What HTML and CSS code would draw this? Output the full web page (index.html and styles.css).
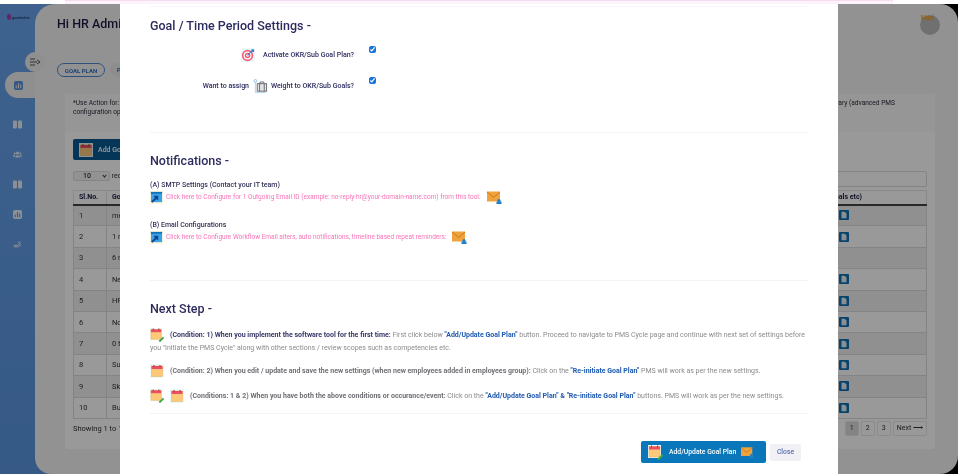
FILE: index.html
```html
<!DOCTYPE html>
<html lang="en">
<head>
<meta charset="utf-8">
<title>Goal Plan</title>
<link rel="stylesheet" href="styles.css">
</head>
<body>
<svg class="defs" aria-hidden="true">
  <symbol id="i-target" viewBox="0 0 16 16">
    <rect width="16" height="16" fill="#eaf8fb"/>
    <circle cx="7.5" cy="8.5" r="6.5" fill="#f2607a"/>
    <circle cx="7.5" cy="8.5" r="4.6" fill="#fff"/>
    <circle cx="7.5" cy="8.5" r="3.2" fill="#ee5a74"/>
    <circle cx="7.5" cy="8.5" r="1.5" fill="#fff"/>
    <path d="M7.5 8.5 13.5 2.5" stroke="#3a7bc8" stroke-width="1.2"/>
    <path d="M12 1.5h3v3h-3z" fill="#3a7bc8"/>
  </symbol>
  <symbol id="i-case" viewBox="0 0 16 16">
    <path d="M2.5 3v11.5h11" fill="none" stroke="#a9d4f0" stroke-width="1"/>
    <circle cx="2.5" cy="2" r="1.5" fill="none" stroke="#8fc4ea" stroke-width="1"/>
    <rect x="4.5" y="5" width="10" height="8" fill="#e4e4e4" stroke="#66666e" stroke-width="1"/>
    <path d="M7.5 5V3.2h4V5M7 5v8M12 5v8" fill="none" stroke="#66666e" stroke-width="1"/>
  </symbol>
  <symbol id="i-launch" viewBox="0 0 14 14">
    <rect x="0" y="0" width="14" height="14" fill="#fdf6d8"/>
    <rect x="1" y="1" width="12" height="11" fill="#39a3ea"/>
    <rect x="1" y="1" width="12" height="2" fill="#1572b8"/>
    <path d="M2 12 7.5 6.5M4.5 6h3.5v3.5" fill="none" stroke="#143f8a" stroke-width="1.8"/>
  </symbol>
  <symbol id="i-mail" viewBox="0 0 15 14">
    <rect x="0" y="1" width="13" height="10" fill="#f0a23c"/>
    <path d="M0 1.5 6.5 7 13 1.5" fill="none" stroke="#c97a1e" stroke-width="1"/>
    <circle cx="12" cy="10" r="1.6" fill="#1f80c8"/>
    <rect x="9.5" y="11" width="5" height="2.5" fill="#1f80c8"/>
  </symbol>
  <symbol id="i-cal" viewBox="0 0 14 14">
    <rect width="14" height="14" fill="#e6f9fb"/>
    <rect x="1.5" y="2" width="11" height="10.5" fill="#fdc878" stroke="#f1b35e" stroke-width=".6"/>
    <rect x="1.5" y="2" width="11" height="3" fill="#ea4f63"/>
    <path d="M4 1v2M10 1v2" stroke="#a33" stroke-width="1"/>
  </symbol>
  <symbol id="i-calpen" viewBox="0 0 15 15">
    <rect width="13" height="13" fill="#e6f9fb"/>
    <rect x="1" y="1.5" width="11" height="10.5" fill="#fdc878" stroke="#f1b35e" stroke-width=".6"/>
    <rect x="1" y="1.5" width="11" height="3" fill="#ea4f63"/>
    <path d="M3.5.5v2M9.5.5v2" stroke="#a33" stroke-width="1"/>
    <path d="M10 14.5 14.5 10" stroke="#3ea844" stroke-width="2"/>
  </symbol>
  <symbol id="i-doc" viewBox="0 0 10 10">
    <rect width="10" height="10" rx="1" fill="#0c70b5"/>
    <path d="M2.5 1.8h3.2l1.8 1.8v4.6h-5z" fill="#e6eef5"/>
  </symbol>
  <symbol id="i-chart" viewBox="0 0 10 10">
    <rect width="10" height="10" rx="2" fill="currentColor"/>
    <path d="M2.5 8V5M5 8V2.5M7.5 8V4" stroke="var(--bar, #5a94da)" stroke-width="1.2"/>
  </symbol>
  <symbol id="i-book" viewBox="0 0 10 10">
    <rect width="4.4" height="9" y=".5" rx="1.2" fill="currentColor"/>
    <rect x="5.6" y=".5" width="4.4" height="9" rx="1.2" fill="currentColor"/>
  </symbol>
  <symbol id="i-people" viewBox="0 0 12 10">
    <circle cx="6" cy="3" r="2" fill="currentColor"/>
    <circle cx="2.3" cy="3.6" r="1.4" fill="currentColor"/>
    <circle cx="9.7" cy="3.6" r="1.4" fill="currentColor"/>
    <path d="M2.8 9c0-4 6.4-4 6.4 0zM0 8c0-2.6 2-3 2.8-2.6L2 8zM12 8c0-2.6-2-3-2.8-2.6L10 8z" fill="currentColor"/>
  </symbol>
  <symbol id="i-hand" viewBox="0 0 12 10">
    <path d="M1 6h5l4-3M1 8h6l4-3M7 2h3" fill="none" stroke="currentColor" stroke-width="1.3"/>
  </symbol>
  <symbol id="i-toggle" viewBox="0 0 12 10">
    <path d="M1 2h5M1 5h7M1 8h5M8 3l3 2-3 2" fill="none" stroke="#55565c" stroke-width="1"/>
  </symbol>
</svg>

<div class="app">
  <aside class="side">
    <div class="logo"><span class="logo-mark"></span>goalsetter</div>
    <div class="side-toggle"><svg class="ic12"><use href="#i-toggle"/></svg></div>
    <nav class="nav">
      <div class="nav-active"><svg class="ic9"><use href="#i-chart"/></svg></div>
      <svg class="nav-ic"><use href="#i-book"/></svg>
      <svg class="nav-ic"><use href="#i-people"/></svg>
      <svg class="nav-ic"><use href="#i-book"/></svg>
      <svg class="nav-ic"><use href="#i-chart"/></svg>
      <svg class="nav-ic"><use href="#i-hand"/></svg>
    </nav>
  </aside>
  <main class="main">
    <header class="top">
      <h1 class="hello">Hi HR Admin</h1>
      <div class="avatar"><span class="avatar-brand">Hari</span></div>
    </header>
    <div class="tabs">
      <span class="tab tab-on">GOAL PLAN</span>
      <span class="tab">PMS</span>
    </div>
    <section class="panel">
      <div class="note">
        <p class="note-left">*Use Action for:<br>configuration options</p>
        <p class="note-right">rary (advanced PMS</p>
      </div>
      <div class="list">
        <button class="add-btn"><svg class="ic14"><use href="#i-cal"/></svg>Add Goal Plan</button>
        <div class="controls">
          <span class="len"><span class="sel">10 <i class="caret"></i></span> records</span>
          <span class="search"></span>
        </div>
        <table class="grid">
          <colgroup><col class="c1"><col class="c2"><col class="c3"></colgroup>
          <thead><tr><th>Sl.No.</th><th>Goal Plan Name</th><th class="act">(Sub Goals etc)</th></tr></thead>
          <tbody>
            <tr><td>1</td><td>me</td><td class="act"><svg class="ic10"><use href="#i-doc"/></svg></td></tr>
            <tr><td>2</td><td>1 r</td><td class="act"><svg class="ic10"><use href="#i-doc"/></svg></td></tr>
            <tr><td>3</td><td>6 r</td><td class="act"></td></tr>
            <tr><td>4</td><td>Ne</td><td class="act"><svg class="ic10"><use href="#i-doc"/></svg></td></tr>
            <tr><td>5</td><td>HR</td><td class="act"><svg class="ic10"><use href="#i-doc"/></svg></td></tr>
            <tr><td>6</td><td>No</td><td class="act"><svg class="ic10"><use href="#i-doc"/></svg></td></tr>
            <tr><td>7</td><td>0 t</td><td class="act"><svg class="ic10"><use href="#i-doc"/></svg></td></tr>
            <tr><td>8</td><td>Su</td><td class="act"><svg class="ic10"><use href="#i-doc"/></svg></td></tr>
            <tr><td>9</td><td>Sk</td><td class="act"><svg class="ic10"><use href="#i-doc"/></svg></td></tr>
            <tr><td>10</td><td>Bu</td><td class="act"><svg class="ic10"><use href="#i-doc"/></svg></td></tr>
          </tbody>
        </table>
        <div class="foot">
          <span>Showing 1 to 10</span>
          <span class="pager"><span class="pg pg-on">1</span><span class="pg">2</span><span class="pg">3</span><span class="pg">Next ⟶</span></span>
        </div>
      </div>
    </section>
  </main>
</div>

<div class="overlay"></div>

<div class="modal">
  <hr class="rule rule-top">
  <h2 class="title t1">Goal / Time Period Settings -</h2>
  <div class="opt opt1">
    <div class="opt-label"><svg class="ic14 gap-r8"><use href="#i-target"/></svg>Activate OKR/Sub Goal Plan?</div>
    <input class="chk" type="checkbox" checked>
  </div>
  <div class="opt opt2">
    <div class="opt-label">Want to assign<svg class="ic15 gap-x"><use href="#i-case"/></svg>Weight to OKR/Sub Goals?</div>
    <input class="chk" type="checkbox" checked>
  </div>
  <hr class="rule r1">
  <h2 class="title t2">Notifications -</h2>
  <div class="sub s1">(A) SMTP Settings (Contact your IT team)</div>
  <div class="lnk">
    <svg class="ic13"><use href="#i-launch"/></svg>
    <span class="lnk-text">Click here to Configure for 1 Outgoing Email ID (example: no-reply-hr@your-domain-name.com) from this tool:</span>
    <svg class="ic15 gap-l6"><use href="#i-mail"/></svg>
  </div>
  <div class="sub s2">(B) Email Configurations</div>
  <div class="lnk">
    <svg class="ic13"><use href="#i-launch"/></svg>
    <span class="lnk-text">Click here to Configure Workflow Email alters, auto notifications, timeline based repeat reminders:</span>
    <svg class="ic15 gap-l6"><use href="#i-mail"/></svg>
  </div>
  <hr class="rule r2">
  <h2 class="title t2">Next Step -</h2>
  <p class="cond c-a"><svg class="ic14 inl"><use href="#i-calpen"/></svg><b class="dark">(Condition: 1) When you implement the software tool for the first time:</b> First click below <b class="blue">"Add/Update Goal Plan"</b> button. Proceed to navigate to PMS Cycle page and continue with next set of settings before you "Initiate the PMS Cycle" along with other sections / review scopes such as competencies etc.</p>
  <p class="cond c-b"><svg class="ic14 inl"><use href="#i-cal"/></svg><b>(Condition: 2) When you edit / update and save the new settings (when new employees added in employees group):</b> Click on the <b class="blue">"Re-initiate Goal Plan"</b> PMS will work as per the new settings.</p>
  <p class="cond c-c"><svg class="ic14 inl"><use href="#i-calpen"/></svg><svg class="ic14 inl"><use href="#i-cal"/></svg><b>(Conditions: 1 &amp; 2) When you have both the above conditions or occurance/event:</b> Click on the <b class="blue">"Add/Update Goal Plan" &amp; "Re-initiate Goal Plan"</b> buttons. PMS will work as per the new settings.</p>
  <hr class="rule r3">
  <div class="actions">
    <button class="btn-main"><svg class="ic15"><use href="#i-calpen"/></svg><span>Add/Update Goal Plan</span><svg class="ic13"><use href="#i-mail"/></svg></button>
    <button class="btn-close">Close</button>
  </div>
</div>
</body>
</html>
```
FILE: styles.css
```css
* { box-sizing: border-box; }
html, body { margin: 0; height: 100%; overflow: hidden; }
body {
  background: #000;
  font-family: Roboto, "Liberation Sans", sans-serif;
  color: #2c2b5e;
  position: relative;
  width: 958px;
  height: 474px;
}
.defs { position: absolute; width: 0; height: 0; }
svg { display: block; flex: none; }
.ic9 { width: 9px; height: 9px; }
.ic10 { width: 10px; height: 10px; }
.ic12 { width: 12px; height: 10px; }
.ic13 { width: 13px; height: 13px; }
.ic14 { width: 14px; height: 14px; }
.ic15 { width: 15px; height: 15px; }

/* page behind the dialog */
.app {
  display: flex;
  height: 470px;
  margin-top: 4px;
  background: #000;
  filter: blur(.35px);
}
.side {
  width: 60px;
  margin-right: -25px;
  background: linear-gradient(#68a4ec, #5a95de);
  position: relative;
  flex: none;
}
.logo {
  position: absolute;
  left: 7px;
  top: 10px;
  display: flex;
  align-items: center;
  gap: 1px;
  font-size: 4px;
  color: #10204a;
  z-index: 3;
}
.logo-mark { width: 4px; height: 6px; background: #a33bb0; border-radius: 2px; }
.side-toggle {
  position: absolute;
  left: 25px;
  top: 48px;
  width: 20px;
  height: 20px;
  border-radius: 50%;
  background: #eee;
  display: flex;
  align-items: center;
  justify-content: center;
  z-index: 3;
}
.nav {
  position: absolute;
  left: 0;
  top: 68px;
  width: 35px;
  display: flex;
  flex-direction: column;
  align-items: center;
  z-index: 3;
}
.nav-active {
  width: 30px;
  height: 26px;
  margin-left: 5px;
  border-radius: 13px 0 0 13px;
  background: #eee;
  display: flex;
  align-items: center;
  padding-left: 9px;
  color: #5a94da;
  --bar: #eee;
  margin-bottom: 22px;
}
.nav-ic { width: 9px; height: 9px; color: #fff; margin-bottom: 21px; opacity: .85; }
.main {
  flex: 1;
  min-width: 0;
  background: #f4f4f4;
  border-radius: 20px 18px 18px 16px;
  position: relative;
  z-index: 2;
  display: flex;
  flex-direction: column;
  padding-left: 22px;
}
.top { display: flex; justify-content: space-between; align-items: flex-start; padding: 11px 18px 0 0; height: 59px; }
.hello { margin: 0; font-size: 12.5px; font-weight: 500; line-height: 18px; color: #1c1c44; }
.avatar { width: 20px; height: 20px; margin-top: 0; border-radius: 50%; background: #bbb; position: relative; }
.avatar-brand { position: absolute; left: 1px; top: -1px; font-size: 7px; font-weight: 700; color: #f09a2a; }
.tabs { display: flex; gap: 5px; }
.tab {
  height: 14px;
  padding: 0 7px;
  border-radius: 7px;
  font-size: 6px;
  font-weight: 700;
  line-height: 13px;
  color: #3a6fc0;
  background: #ececec;
}
.tab-on { width: 48px; padding: 0; text-align: center; background: #f4f4f4; border: 1px solid #4e86d4; }
.panel {
  margin: 17px 23px 0 8px;
  height: 355px;
  background: #fff;
  border-radius: 3px;
}
.note {
  display: flex;
  justify-content: space-between;
  height: 38px;
  padding: 5px 40px 0 8px;
  font-size: 6.6px;
  line-height: 9px;
  background: #fbfbfb;
  color: #2a2a3a;
}
.note p { margin: 0; white-space: nowrap; }
.list { padding: 7px 8px 0; }
.add-btn {
  display: flex;
  align-items: center;
  gap: 5px;
  width: 100px;
  height: 21px;
  padding: 0 6px;
  border: 0;
  border-radius: 2px;
  background: #0a5a92;
  color: #fff;
  font: 500 7px Roboto, sans-serif;
}
.controls { display: flex; justify-content: space-between; margin-top: 11px; height: 18px; font-size: 7px; color: #333; }
.sel { display: inline-block; width: 37px; height: 10px; border: 1px solid #ddd; border-radius: 2px; padding-left: 9px; line-height: 8px; background: #f4f4f4; font-weight: 500; position: relative; }
.caret { position: absolute; right: 3px; top: 2px; width: 3px; height: 3px; border-right: 1px solid #333; border-bottom: 1px solid #333; transform: rotate(45deg); }
.search { width: 280px; height: 16px; border: 1px solid #ddd; border-radius: 2px; }
.grid { width: 854px; margin-top: 1px; border-collapse: collapse; table-layout: fixed; font-size: 7.5px; color: #333; }
.c1 { width: 33px; }
.c3 { width: 147px; }
.grid th { height: 14px; border: 1px solid #e4e4e4; border-bottom: 2px solid #444; text-align: left; padding: 0 5px; font-size: 7px; font-weight: 700; color: #1c1c44; }
.grid td { height: 21.4px; border: 1px solid #dcdcdc; padding: 0 5px; }
.grid tbody tr:nth-child(odd) { background: #f0f0f0; }
.grid th.act { text-align: right; padding-right: 64px; }
.grid td.act { padding: 0 0 0 59px; }
.foot { display: flex; justify-content: space-between; align-items: center; margin-top: 2px; font-size: 7.5px; color: #333; }
.pager { display: flex; gap: 2px; }
.pg { min-width: 14px; height: 15px; padding: 0 3px; border: 1px solid #e8e8e8; border-radius: 2px; text-align: center; line-height: 13px; font-size: 7px; }
.pg-on { background: #dcdcdc; }

.overlay { position: absolute; inset: 0; background: rgba(0, 0, 0, .4); z-index: 5; }
.modal {
  position: absolute;
  left: 120px;
  top: 4px;
  width: 718px;
  height: 470px;
  padding: 2px 30px 0;
  background: #fff;
  z-index: 6;
  overflow: hidden;
  font-size: 7px;
  filter: blur(.35px);
}
body::before {
  content: "";
  position: absolute;
  left: 0;
  top: 0;
  width: 958px;
  height: 4px;
  background:
    linear-gradient(90deg, #fff 65px, transparent 65px, transparent 893px, #fff 893px),
    linear-gradient(#f7ddf2 25%, #fdf4fb 25%);
  z-index: 7;
}
.rule { margin: 0; border: 0; height: 1px; background: #f3f3f3; }
.rule-top { background: #faf3fa; }
.r1 { margin-top: 39px; }
.r2 { margin-top: 37px; }
.r3 { margin-top: 10px; }
.title { margin: 0; font-size: 12.5px; font-weight: 500; line-height: 18px; color: #2c2b5e; }
.t1 { margin-top: 10px; }
.t2 { margin-top: 19px; }
.opt { display: flex; width: 226px; justify-content: space-between; align-items: flex-start; }
.opt1 { margin-top: 13px; }
.opt2 { margin-top: 17px; }
.opt-label { width: 204px; display: flex; justify-content: flex-end; align-items: center; height: 14px; font-weight: 500; white-space: nowrap; color: #2c2b5e; }
.gap-r8 { margin-right: 8px; }
.gap-x { margin: 0 3px 0 4px; }
.chk { width: 7px; height: 7px; margin: -2px 0 0; accent-color: #1673e0; }
.sub { height: 10px; line-height: 10px; font-weight: 500; color: #33335a; }
.s1 { margin-top: 10px; }
.s2 { margin-top: 17px; }
.lnk { display: flex; align-items: center; height: 12px; margin-top: 1px; color: #f774b6; white-space: nowrap; font-size: 6.5px; }
.lnk-text { margin-left: 3px; }
.gap-l6 { margin-left: 6px; }
.cond { margin: 0; line-height: 13px; color: #8b8b8f; }
.c-a { margin-top: 11px; }
.c-b { margin-top: 10px; }
.c-c { margin-top: 12px; }
.cond b { font-weight: 700; color: #6f6f75; }
.cond b.dark { color: #38386a; }
.cond b.blue { color: #1f5ab0; }
.inl { display: inline-block; vertical-align: middle; margin: -3px 6px -2px 0; }
.actions { display: flex; justify-content: flex-end; align-items: center; gap: 4px; margin-top: 27px; padding-right: 7px; }
.btn-main {
  width: 125px;
  height: 22px;
  display: flex;
  align-items: center;
  padding: 0 7px;
  border: 0;
  border-radius: 2px;
  background: #0a77bb;
  color: #fff;
  font: 500 6.8px Roboto, sans-serif;
}
.btn-main span { margin: 0 5px 0 6px; white-space: nowrap; }
.btn-close {
  width: 31px;
  height: 17px;
  border: 0;
  border-radius: 2px;
  background: #f1f1f5;
  color: #5a70b0;
  font: 500 6.8px Roboto, sans-serif;
  padding: 0;
}
```
